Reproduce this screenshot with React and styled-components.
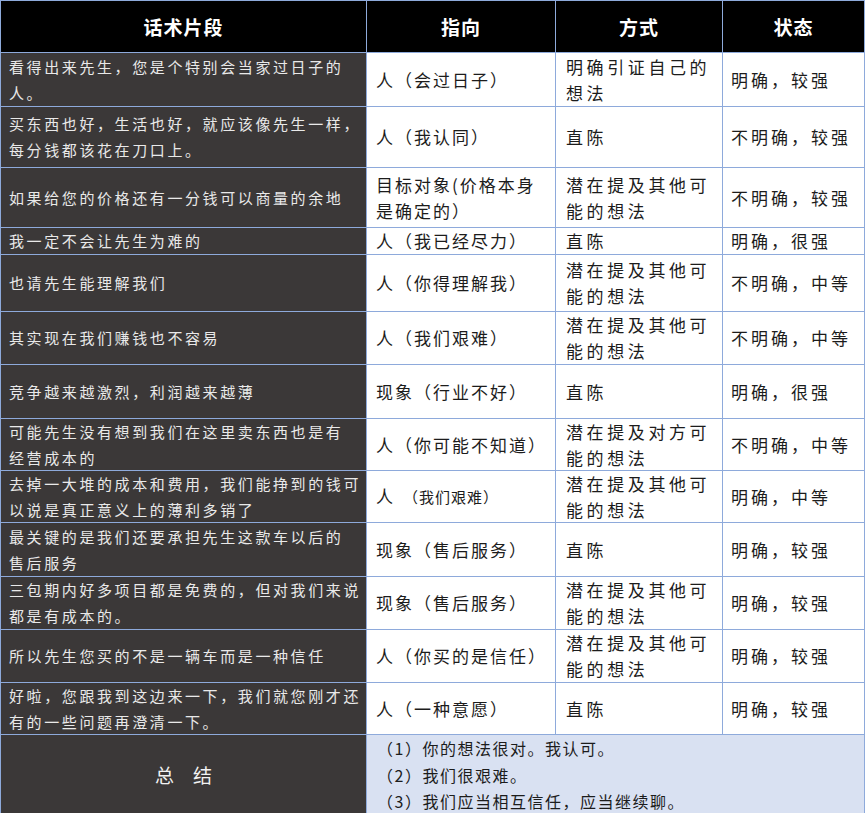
import styled, { createGlobalStyle } from 'styled-components';

const GlobalStyle = createGlobalStyle`
  html, body {
    margin: 0;
    padding: 0;
    background: #ffffff;
  }
  body {
    font-family: "Noto Sans CJK SC", "Noto Sans", sans-serif;
  }
`;

const BORDER = '#8eaadb';

const Table = styled.div`
  width: 865px;
  display: flex;
  flex-direction: column;
  gap: 1px;
  padding: 1px 1px 1px 1px;
  box-sizing: border-box;
  background: ${BORDER};
`;

const Row = styled.div`
  display: grid;
  grid-template-columns: 365px 188px 166px 141px;
  gap: 1px;
  height: ${p => p.$h}px;
`;

const HeadCell = styled.div`
  background: #000;
  color: #fff;
  font-size: 19px;
  font-weight: 700;
  letter-spacing: 1px;
  display: flex;
  align-items: center;
  justify-content: center;
`;

const LeadCell = styled.div`
  background: #3b3838;
  color: #e9e9e9;
  font-size: 15px;
  line-height: 26px;
  letter-spacing: 2.6px;
  padding-left: 8px;
  display: flex;
  flex-direction: column;
  justify-content: center;
  white-space: nowrap;
  overflow: hidden;
`;

const Cell = styled.div`
  background: #fff;
  color: #1c1c1c;
  font-size: 17px;
  line-height: 26px;
  letter-spacing: ${p => p.$spacing}px;
  padding-left: ${p => p.$pad}px;
  display: flex;
  flex-direction: column;
  justify-content: center;
  white-space: nowrap;
  overflow: hidden;
`;

const Small = styled.span`
  font-size: 15px;
  letter-spacing: 1px;
  margin-left: 8px;
`;

const SumLabel = styled.div`
  background: #3b3838;
  color: #f2f2f2;
  font-size: 19px;
  display: flex;
  align-items: center;
  justify-content: center;
`;

const SumBody = styled.div`
  grid-column: span 3;
  background: #d9e1f2;
  color: #1c1c1c;
  font-size: 16px;
  line-height: 26.5px;
  letter-spacing: 1.5px;
  padding-left: 10px;
  display: flex;
  flex-direction: column;
  justify-content: center;
`;

const OTHER = ['潜在提及其他可', '能的想法'];

const rows = [
  { h: 53, a: ['看得出来先生，您是个特别会当家过日子的', '人。'], b: ['人（会过日子）'], c: ['明确引证自己的', '想法'], d: '明确，较强' },
  { h: 60, a: ['买东西也好，生活也好，就应该像先生一样，', '每分钱都该花在刀口上。'], b: ['人（我认同）'], c: ['直陈'], d: '不明确，较强' },
  { h: 59, a: ['如果给您的价格还有一分钱可以商量的余地'], b: ['目标对象(价格本身', '是确定的）'], c: OTHER, d: '不明确，较强' },
  { h: 26, a: ['我一定不会让先生为难的'], b: ['人（我已经尽力）'], c: ['直陈'], d: '明确，很强' },
  { h: 56, a: ['也请先生能理解我们'], b: ['人（你得理解我）'], c: OTHER, d: '不明确，中等' },
  { h: 52, a: ['其实现在我们赚钱也不容易'], b: ['人（我们艰难）'], c: OTHER, d: '不明确，中等' },
  { h: 53, a: ['竞争越来越激烈，利润越来越薄'], b: ['现象（行业不好）'], c: ['直陈'], d: '明确，很强' },
  { h: 51, a: ['可能先生没有想到我们在这里卖东西也是有', '经营成本的'], b: ['人（你可能不知道）'], c: ['潜在提及对方可', '能的想法'], d: '不明确，中等' },
  { h: 51, a: ['去掉一大堆的成本和费用，我们能挣到的钱可', '以说是真正意义上的薄利多销了'], b: null, c: OTHER, d: '明确，中等' },
  { h: 53, a: ['最关键的是我们还要承担先生这款车以后的', '售后服务'], b: ['现象（售后服务）'], c: ['直陈'], d: '明确，较强' },
  { h: 52, a: ['三包期内好多项目都是免费的，但对我们来说', '都是有成本的。'], b: ['现象（售后服务）'], c: OTHER, d: '明确，较强' },
  { h: 52, a: ['所以先生您买的不是一辆车而是一种信任'], b: ['人（你买的是信任）'], c: OTHER, d: '明确，较强' },
  { h: 51, a: ['好啦，您跟我到这边来一下，我们就您刚才还', '有的一些问题再澄清一下。'], b: ['人（一种意愿）'], c: ['直陈'], d: '明确，较强' },
];

const Lines = ({ items }) => items.map((t, i) => <div key={i}>{t}</div>);

export default function App() {
  return (
    <>
      <GlobalStyle />
      <Table>
        <Row $h={51}>
          <HeadCell>话术片段</HeadCell>
          <HeadCell>指向</HeadCell>
          <HeadCell>方式</HeadCell>
          <HeadCell>状态</HeadCell>
        </Row>
        {rows.map((r, i) => (
          <Row key={i} $h={r.h}>
            <LeadCell><Lines items={r.a} /></LeadCell>
            <Cell $spacing={2} $pad={9}>
              {r.b ? <Lines items={r.b} /> : <div>人<Small>（我们艰难）</Small></div>}
            </Cell>
            <Cell $spacing={3.6} $pad={10}><Lines items={r.c} /></Cell>
            <Cell $spacing={3} $pad={8}><div>{r.d}</div></Cell>
          </Row>
        ))}
        <Row $h={77}>
          <SumLabel>总　结</SumLabel>
          <SumBody>
            <div>（1）你的想法很对。我认可。</div>
            <div>（2）我们很艰难。</div>
            <div>（3）我们应当相互信任，应当继续聊。</div>
          </SumBody>
        </Row>
      </Table>
    </>
  );
}
